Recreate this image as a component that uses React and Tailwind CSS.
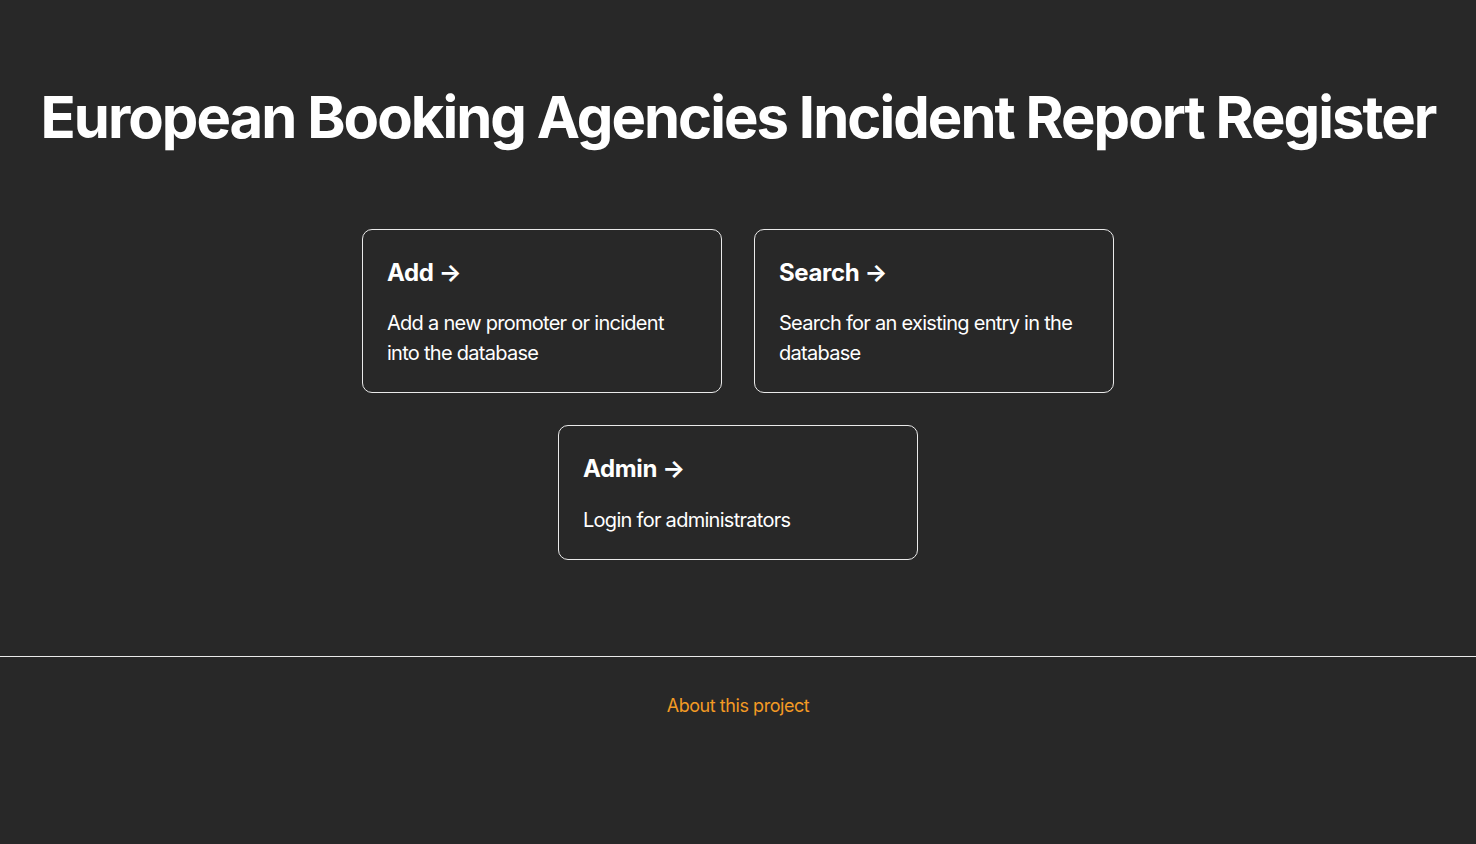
const cards = [
  { title: "Add", text: "Add a new promoter or incident into the database" },
  { title: "Search", text: "Search for an existing entry in the database" },
  { title: "Admin", text: "Login for administrators" },
];

function Card({ title, text }) {
  return (
    <a href="#" className="block w-[360px] p-6 border border-[#eaeaea] rounded-[10px] text-white">
      <h2 className="mb-4 text-2xl font-bold leading-[1.6] tracking-[-0.015em]">{title} &rarr;</h2>
      <p className="text-[20px] leading-[30px] tracking-[-0.036em]">{text}</p>
    </a>
  );
}

export default function App() {
  return (
    <div className="min-h-screen bg-[#282828] text-white font-['Inter',sans-serif]">
      <main className="flex flex-col items-center pt-20 pb-24">
        <h1 className="text-[58px] font-bold leading-[74px] tracking-[-0.034em] text-center whitespace-nowrap">
          European Booking Agencies Incident Report Register
        </h1>
        <div className="mt-[75px] flex flex-wrap justify-center gap-8 max-w-[800px]">
          {cards.map((c) => (
            <Card key={c.title} {...c} />
          ))}
        </div>
      </main>
      <footer className="h-[100px] border-t border-[#eaeaea] flex items-center justify-center">
        <a href="#" className="text-lg tracking-[-0.025em] text-[#f39a24]">About this project</a>
      </footer>
    </div>
  );
}
